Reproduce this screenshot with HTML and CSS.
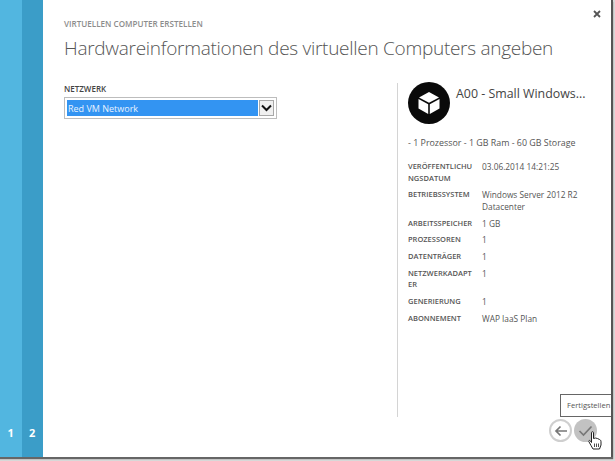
FILE: index.html
```html
<!DOCTYPE html>
<html lang="de">
<head>
<meta charset="utf-8">
<title>Virtuellen Computer erstellen</title>
<link rel="stylesheet" href="styles.css">
</head>
<body>
<div class="dialog">
  <nav class="steps">
    <div class="step step-one"><span>1</span></div>
    <div class="step step-two"><span>2</span></div>
  </nav>
  <main class="content">
    <header class="head">
      <div class="kicker">VIRTUELLEN COMPUTER ERSTELLEN</div>
      <h1 class="title">Hardwareinformationen des virtuellen Computers angeben</h1>
    </header>
    <div class="columns">
      <section class="form">
        <label class="field-label">NETZWERK</label>
        <div class="select">
          <div class="select-value">Red VM Network</div>
          <div class="select-arrow">
            <svg width="11" height="8" viewBox="0 0 11 8"><path d="M1 1.5 5.5 6 10 1.5" fill="none" stroke="#111" stroke-width="2"/></svg>
          </div>
        </div>
      </section>
      <aside class="info">
        <div class="info-head">
          <div class="avatar">
            <svg width="28" height="28" viewBox="0 0 28 28"><path d="M14 3 24 8.500 14 13.800 4 8.500Z M3.500 10 13.200 15.200V25L3.500 19.500Z M24.500 10 14.800 15.200V25L24.500 19.500Z" fill="#fff"/></svg>
          </div>
          <div class="info-name">A00 - Small Windows...</div>
        </div>
        <p class="info-summary">- 1 Prozessor - 1 GB Ram - 60 GB Storage</p>
        <dl class="specs">
          <dt>VERÖFFENTLICHU NGSDATUM</dt><dd>03.06.2014 14:21:25</dd>
          <dt>BETRIEBSSYSTEM</dt><dd>Windows Server 2012 R2 Datacenter</dd>
          <dt>ARBEITSSPEICHER</dt><dd>1 GB</dd>
          <dt>PROZESSOREN</dt><dd>1</dd>
          <dt>DATENTRÄGER</dt><dd>1</dd>
          <dt>NETZWERKADAPT ER</dt><dd>1</dd>
          <dt>GENERIERUNG</dt><dd>1</dd>
          <dt>ABONNEMENT</dt><dd>WAP IaaS Plan</dd>
        </dl>
      </aside>
    </div>
  </main>
  <button class="close" aria-label="Schließen">
    <svg width="8" height="8" viewBox="0 0 8 8"><path d="M1 1 7 7M7 1 1 7" stroke="#555" stroke-width="1.800"/></svg>
  </button>
  <div class="tooltip">Fertigstellen</div>
  <div class="actions">
    <div class="round back">
      <svg width="14" height="12" viewBox="0 0 14 12"><path d="M6.500 1.500 2 6l4.500 4.500M2 6h11" fill="none" stroke="#777" stroke-width="1.700"/></svg>
    </div>
    <div class="round done">
      <svg width="15" height="12" viewBox="0 0 15 12"><path d="M1.500 6 5.500 10 13.500 1.500" fill="none" stroke="#777" stroke-width="1.700"/></svg>
    </div>
  </div>
  <svg class="cursor" width="14" height="19" viewBox="0 0 14 19"><path d="M3.500 1.500C3.500.5 5.500.5 5.500 1.500V7.500L7.500 7 9.500 7.500 11.500 8.500C12.800 9 13 10 13 11V14L11.500 18H5L3 14.500.8 10.500C.5 9.500 1.700 9 2.500 10L3.500 11.500Z" fill="#fff" stroke="#222"/><path d="M6.500 12.500V16M8.500 12.500V16M10.500 12.500V16" stroke="#222" stroke-width=".8"/></svg>
</div>
</body>
</html>
```

FILE: styles.css
```css
html, body {
  margin: 0;
  padding: 0;
}
body {
  width: 615px;
  height: 461px;
  overflow: hidden;
  background: #d8d8d8;
  font-family: "Open Sans", "Noto Sans", sans-serif;
  color: #444;
}
.dialog {
  position: relative;
  display: flex;
  width: 611px;
  height: 457px;
  background: #fff;
  border-right: 2px solid #555;
  box-shadow: 0 2px 1px #666;
}
.steps {
  display: flex;
  flex: none;
  width: 43px;
}
.step {
  flex: 1;
  display: flex;
  align-items: flex-end;
  justify-content: center;
  padding-bottom: 17px;
  color: #fff;
  font-size: 11px;
  font-weight: 700;
  line-height: 14px;
}
.step-one { background: #52b6e0; }
.step-two { background: #3b9dc8; }
.content {
  flex: 1;
  display: flex;
  flex-direction: column;
  padding: 18px 0 40px 21px;
  min-width: 0;
}
.kicker {
  font-size: 8.100px;
  line-height: 11px;
  font-weight: 600;
  color: #8c8c8c;
}
.title {
  margin: 5px 0 0;
  font-size: 19px;
  line-height: 28px;
  font-weight: 300;
  letter-spacing: -0.28px;
  color: #555;
  white-space: nowrap;
}
.columns {
  flex: 1;
  display: flex;
  margin-top: 20px;
  justify-content: space-between;
}
.form {
  width: 212px;
  padding-top: 1px;
}
.field-label {
  display: block;
  font-size: 8px;
  line-height: 11px;
  font-weight: 600;
  color: #444;
}
.select {
  display: flex;
  box-sizing: border-box;
  width: 213px;
  height: 22px;
  margin-top: 3px;
  padding: 2px;
  border: 1px solid #bdbdbd;
  background: #fff;
}
.select-value {
  flex: 1;
  background: #3394f2;
  color: #e8f2ff;
  font-size: 9px;
  line-height: 17px;
  padding-left: 1px;
}
.select-arrow {
  display: flex;
  align-items: center;
  justify-content: center;
  width: 15px;
  margin-left: 1px;
  border: 1px solid #a8a8a8;
  box-sizing: border-box;
  background: #f0f0f0;
}
.info {
  box-sizing: border-box;
  width: 200px;
  margin-top: 1px;
  margin-right: 14px;
  padding: 0 0 0 10px;
  border-left: 1px solid #d4d4d4;
}
.info-head {
  display: flex;
  gap: 6px;
}
.avatar {
  flex: none;
  display: flex;
  align-items: center;
  justify-content: center;
  width: 42px;
  height: 42px;
  margin-top: -1px;
  border-radius: 50%;
  background: #0a0a0a;
}
.info-name {
  font-size: 12.400px;
  line-height: 18px;
  padding-top: 2px;
  color: #444;
  white-space: nowrap;
}
.info-summary {
  margin: 12px 0 0;
  font-size: 8.900px;
  line-height: 14px;
  color: #555;
  white-space: nowrap;
}
.specs {
  display: grid;
  grid-template-columns: 66px 1fr;
  column-gap: 8px;
  row-gap: 5.300px;
  margin: 11px 0 0;
  font-size: 8px;
  line-height: 11.500px;
}
.specs dt {
  font-weight: 600;
  font-size: 7.500px;
  color: #555;
  word-break: break-all;
}
.specs dd {
  margin: 0;
  font-size: 8.300px;
  color: #555;
}
.close {
  position: absolute;
  top: 10px;
  right: 10px;
  display: flex;
  padding: 0;
  border: 0;
  background: none;
}
.tooltip {
  position: absolute;
  top: 394px;
  right: 0;
  box-sizing: border-box;
  width: 51px;
  height: 23px;
  padding-left: 6px;
  border: 1px solid #666;
  border-right: 0;
  background: #fff;
  font-size: 7.600px;
  line-height: 21px;
  color: #555;
  white-space: nowrap;
}
.actions {
  position: absolute;
  top: 419px;
  right: 14px;
  display: flex;
  gap: 2px;
}
.round {
  display: flex;
  align-items: center;
  justify-content: center;
  box-sizing: border-box;
  width: 23px;
  height: 23px;
  border-radius: 50%;
}
.back {
  border: 2px solid #cfcfcf;
}
.done {
  background: #c2c2c2;
}
.cursor {
  position: absolute;
  top: 431px;
  left: 588px;
}
```
